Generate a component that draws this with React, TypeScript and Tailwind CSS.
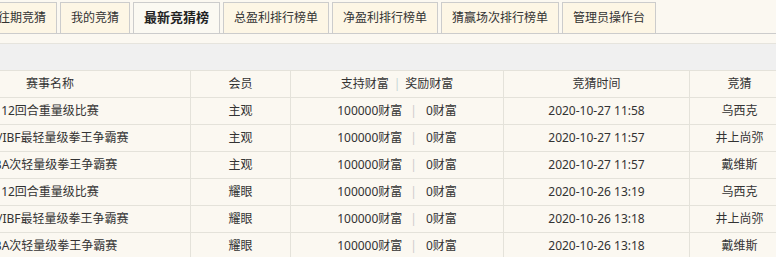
import React from "react";

const tabs = [
  { label: "往期竞猜", active: false },
  { label: "我的竞猜", active: false },
  { label: "最新竞猜榜", active: true },
  { label: "总盈利排行榜单", active: false },
  { label: "净盈利排行榜单", active: false },
  { label: "猜赢场次排行榜单", active: false },
  { label: "管理员操作台", active: false },
];

const rows = [
  { name: "12回合重量级比赛", level: "主观", support: "100000财富", reward: "0财富", time: "2020-10-27 11:58", pick: "乌西克" },
  { name: "WBA/IBF最轻量级拳王争霸赛", level: "主观", support: "100000财富", reward: "0财富", time: "2020-10-27 11:57", pick: "井上尚弥" },
  { name: "WBA次轻量级拳王争霸赛", level: "主观", support: "100000财富", reward: "0财富", time: "2020-10-27 11:57", pick: "戴维斯" },
  { name: "12回合重量级比赛", level: "耀眼", support: "100000财富", reward: "0财富", time: "2020-10-26 13:19", pick: "乌西克" },
  { name: "WBA/IBF最轻量级拳王争霸赛", level: "耀眼", support: "100000财富", reward: "0财富", time: "2020-10-26 13:18", pick: "井上尚弥" },
  { name: "WBA次轻量级拳王争霸赛", level: "耀眼", support: "100000财富", reward: "0财富", time: "2020-10-26 13:18", pick: "戴维斯" },
];

const cols = "grid grid-cols-[281px_100px_213px_186px_100px] ml-[-90px]";
const cell = "flex items-center justify-center whitespace-nowrap border-r border-[#e4e2da]";

const App: React.FC = () => {
  return (
    <div className="w-[778px] min-h-[257px] bg-white">
      <div
        className="w-[776px] h-[257px] overflow-hidden bg-[#fbf8f1] text-[12px] text-[#333]"
        style={{ fontFamily: '"Noto Sans", "Noto Sans CJK SC", sans-serif' }}
      >
        {/* Tabs */}
        <div className="pt-[2px] border-b border-[#cccccc]">
          <div className="flex gap-[3px] ml-[-13px]">
            {tabs.map((tab) => (
              <div
                key={tab.label}
                className={`h-[31px] px-[10px] flex items-center whitespace-nowrap border border-b-0 border-[#cccccc] ${
                  tab.active
                    ? "bg-[#fbf9f2] font-bold text-[13px] text-[#222]"
                    : "bg-[#fdf6e5]"
                }`}
              >
                {tab.label}
              </div>
            ))}
          </div>
        </div>

        {/* Spacer + toolbar band */}
        <div className="h-[10px] border-b border-[#e6e4dd]" />
        <div className="h-[27px] bg-[#f0f0f0] border-b border-[#e4e2da]" />

        {/* Table header */}
        <div className={`${cols} h-[27px] border-b border-[#e4e2da]`}>
          <div className={cell}>赛事名称</div>
          <div className={cell}>会员</div>
          <div className={cell}>
            支持财富<span className="mx-[5px] text-[#c6d6d6]">|</span>奖励财富
          </div>
          <div className={cell}>竞猜时间</div>
          <div className={cell}>竞猜</div>
        </div>

        {/* Rows */}
        {rows.map((row, i) => (
          <div key={i} className={`${cols} h-[27px] border-b border-[#e4e2da]`}>
            <div className={cell}>{row.name}</div>
            <div className={cell}>{row.level}</div>
            <div className={cell}>
              <span>{row.support}</span>
              <span className="ml-[8px] mr-[9px] text-[#cccccc]">|</span>
              <span>{row.reward}</span>
            </div>
            <div className={cell}>{row.time}</div>
            <div className={cell}>{row.pick}</div>
          </div>
        ))}
      </div>
    </div>
  );
};

export default App;
